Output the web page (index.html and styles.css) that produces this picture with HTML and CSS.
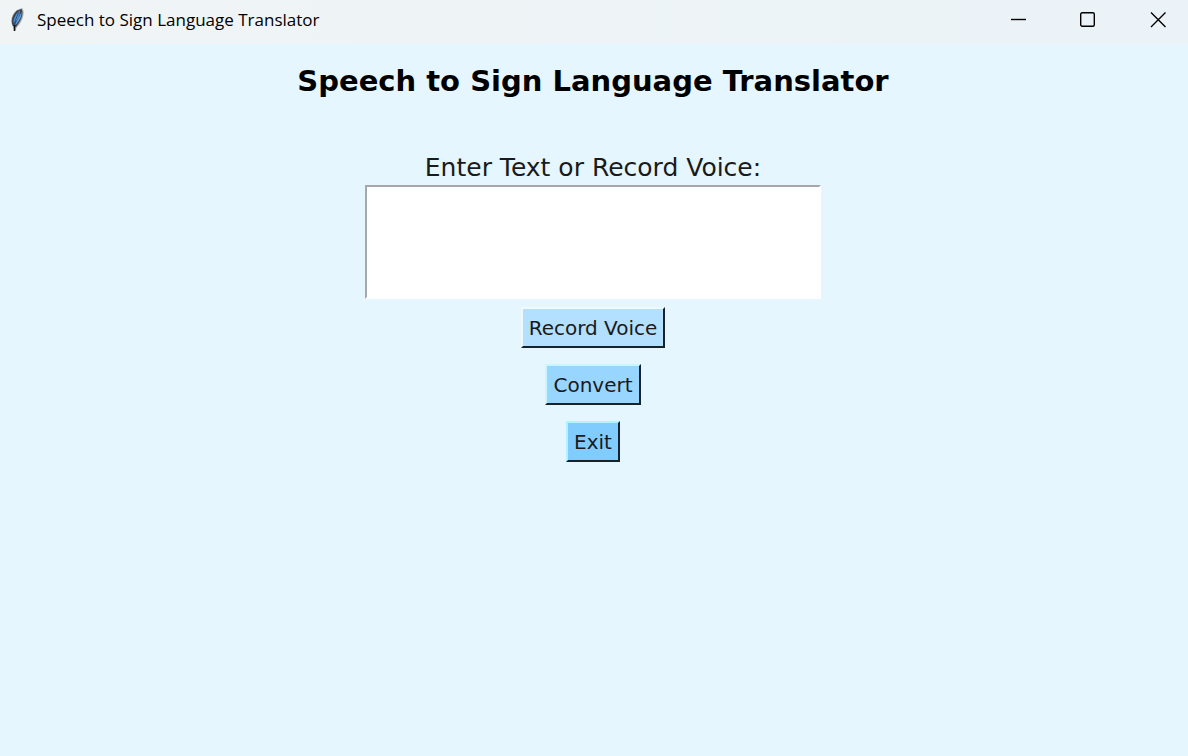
FILE: index.html
```html
<!DOCTYPE html>
<html lang="en">
<head>
<meta charset="utf-8">
<title>Speech to Sign Language Translator</title>
<link rel="stylesheet" href="styles.css">
</head>
<body>
<header class="titlebar">
  <svg class="app-icon" width="16" height="26" viewBox="0 0 16 26" aria-hidden="true">
    <path d="M4 20C1 15 2 7 8 3L13 1C17 5 13 16 8 20L6 24Z" fill="#a9b1b6"/>
    <path d="M4 19C1 14 4 7 8 3.500L12.500 2C15.500 7 11 15 7 20Z" fill="#3d434b"/>
    <path d="M4.500 16C4 12 7 6 11 3.500C11 9 8.500 14 4.500 16Z" fill="#4c92de"/>
    <path d="M7 17.500C11 13 13 9 12.500 5L9.500 11L6 17.500Z" fill="#5ba1e8"/>
    <path d="M10 5C7 11 5.500 15 5.500 19" fill="none" stroke="#2b517e" stroke-width="1"/>
    <path d="M5.500 18V24" fill="none" stroke="#111317" stroke-width="1.600"/>
  </svg>
  <span class="window-title">Speech to Sign Language Translator</span>
  <div class="window-controls">
    <button class="window-button" type="button" aria-label="Minimize">
      <svg width="16" height="16" viewBox="0 0 16 16"><path d="M1 7.500H16"/></svg>
    </button>
    <button class="window-button" type="button" aria-label="Maximize">
      <svg width="16" height="16" viewBox="0 0 16 16"><rect x="0.700" y="0.700" width="13.600" height="13.600" rx="1.500"/></svg>
    </button>
    <button class="window-button" type="button" aria-label="Close">
      <svg width="16" height="16" viewBox="0 0 16 16"><path d="M1 0.500L15.500 15M15.500 0.500L1 15"/></svg>
    </button>
  </div>
</header>
<main class="content">
  <h1 class="heading">Speech to Sign Language Translator</h1>
  <label class="label" for="phrase">Enter Text or Record Voice:</label>
  <textarea class="phrase" id="phrase"></textarea>
  <div class="actions">
    <button class="action action-record" type="button">Record Voice</button>
    <button class="action action-convert" type="button">Convert</button>
    <button class="action action-exit" type="button">Exit</button>
  </div>
</main>
</body>
</html>
```

FILE: styles.css
```css
* {
  box-sizing: border-box;
}

body {
  margin: 0;
  min-height: 100vh;
  background: #e5f6ff;
  color: #000;
  font-family: Verdana, "DejaVu Sans", sans-serif;
}

.titlebar {
  display: flex;
  align-items: center;
  height: 44px;
  padding: 0 7px 4px 9px;
  background: linear-gradient(90deg, #f0f4f5, #ebf3f8);
}

.window-title {
  margin-left: 12px;
  font: 17px/24px "Segoe UI", "Open Sans", sans-serif;
}

.window-controls {
  display: flex;
  gap: 24px;
  margin-left: auto;
}

.window-button {
  display: grid;
  place-items: center;
  width: 46px;
  height: 40px;
  padding: 0;
  border: 0;
  background: transparent;
}

.window-button svg {
  display: block;
  fill: none;
  stroke: #000;
  stroke-width: 1.400;
}

.content {
  display: flex;
  flex-direction: column;
  align-items: center;
  padding: 19px 18px 20px 16px;
}

.heading {
  margin: 0 0 52px;
  font-size: 29px;
  line-height: 36px;
}

.label {
  color: #1a1a1a;
  font-size: 25px;
  line-height: 34px;
}

.phrase {
  width: 456px;
  max-width: 100%;
  height: 114px;
  padding: 4px;
  border: 2px solid #fff;
  border-top-color: #a5a7aa;
  border-left-color: #a5a7aa;
  outline: 0;
  background: #fff;
  font: inherit;
  font-size: 20px;
  resize: none;
}

.actions {
  display: flex;
  flex-direction: column;
  align-items: center;
  gap: 16px;
  margin-top: 8px;
}

.action {
  height: 41px;
  padding: 0 6px;
  border: 2px solid;
  color: #1a1a1a;
  font-family: inherit;
  font-size: 20px;
  line-height: 36px;
}

.action-record {
  border-color: #eefaff #17222a #17222a #eefaff;
  background: #b3e0ff;
}

.action-convert {
  border-color: #c8f8ff #17222a #17222a #c8f8ff;
  background: #99d6ff;
}

.action-exit {
  border-color: #b0f4ff #17222a #17222a #b0f4ff;
  background: #80ccff;
}
```
